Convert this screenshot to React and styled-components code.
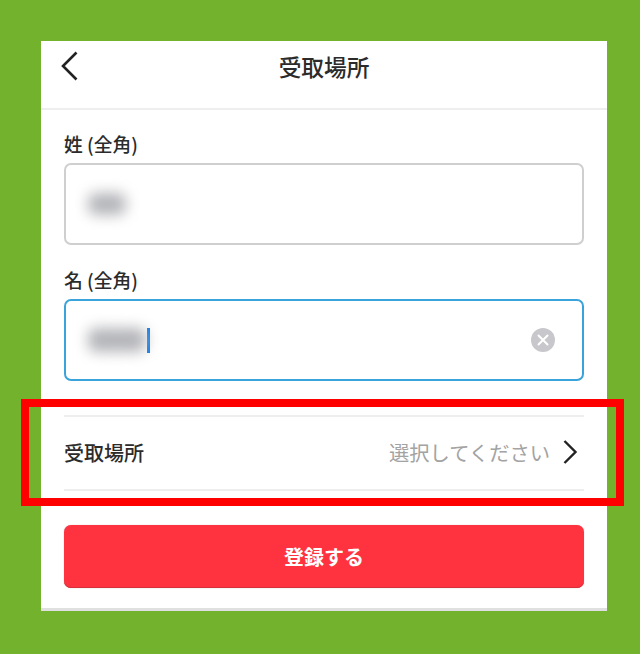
import React from 'react';
import styled, { createGlobalStyle } from 'styled-components';

const GlobalStyle = createGlobalStyle`
  html, body {
    margin: 0;
    padding: 0;
    background: #72b22c;
  }
  body {
    font-family: "Noto Sans CJK JP", "Liberation Sans", sans-serif;
    color: #2b2b2b;
  }
`;

function App() {
  return (
    <Page>
      <GlobalStyle />
      <Card>
        <Header>
          <BackIcon width="18" height="30" viewBox="0 0 18 30">
            <path d="M15.5 1.5 L2 15 L15.5 28.5" />
          </BackIcon>
          <Title>受取場所</Title>
        </Header>
        <Form>
          <Field>
            <Label>姓 (全角)</Label>
            <Input>
              <Smudge $width={38} $height={22} />
            </Input>
          </Field>
          <Field>
            <Label>名 (全角)</Label>
            <Input $focused>
              <Smudge $width={58} $height={24} />
              <Caret />
              <ClearIcon width="24" height="24" viewBox="0 0 24 24">
                <circle cx="12" cy="12" r="12" fill="#c8c8cc" />
                <path d="M7.5 7.5 L16.5 16.5 M16.5 7.5 L7.5 16.5" stroke="#fff" strokeWidth="2" strokeLinecap="round" />
              </ClearIcon>
            </Input>
          </Field>
          <PlaceRow>
            <RowLabel>受取場所</RowLabel>
            <RowValue>選択してください</RowValue>
            <NextIcon width="16" height="26" viewBox="0 0 16 26">
              <path d="M2.5 2 L13.5 13 L2.5 24" />
            </NextIcon>
          </PlaceRow>
          <SubmitButton>登録する</SubmitButton>
        </Form>
      </Card>
      <Highlight />
    </Page>
  );
}

const Page = styled.div`
  position: relative;
  height: 654px;
  padding: 41px 33px 0 41px;
  box-sizing: border-box;
  overflow: hidden;
`;

const Card = styled.div`
  width: 566px;
  height: 570px;
  box-sizing: border-box;
  background: #fff;
  border-bottom: 3px solid #e0e0e0;
`;

const Header = styled.div`
  position: relative;
  height: 69px;
  box-sizing: border-box;
  padding-bottom: 15px;
  border-bottom: 2px solid #eeeeef;
  display: flex;
  justify-content: center;
  align-items: center;
`;

const BackIcon = styled.svg`
  position: absolute;
  left: 20px;
  top: 10px;
  fill: none;
  stroke: #222;
  stroke-width: 2.6;
`;

const Title = styled.h1`
  margin: 0;
  font-size: 22.7px;
  line-height: 30px;
  font-weight: 500;
  color: #2b2b2b;
`;

const Form = styled.div`
  padding: 21px 23px 0;
  display: flex;
  flex-direction: column;
`;

const Field = styled.div`
  margin-bottom: 22px;
  display: flex;
  flex-direction: column;
`;

const Label = styled.label`
  font-size: 18.8px;
  line-height: 26px;
  height: 32px;
  font-weight: 500;
  color: #2b2b2b;
`;

const Input = styled.div`
  height: 82px;
  box-sizing: border-box;
  border: 2px solid ${(p) => (p.$focused ? '#3aa3dc' : '#cfcfcf')};
  border-radius: 7px;
  padding: 0 27px 0 22px;
  display: flex;
  align-items: center;
`;

const Smudge = styled.div`
  width: ${(p) => p.$width}px;
  height: ${(p) => p.$height}px;
  background: #b4b5b9;
  border-radius: 8px;
  filter: blur(7px);
`;

const Caret = styled.div`
  width: 3px;
  height: 25px;
  margin-left: 1px;
  background: #0a7cf0;
`;

const ClearIcon = styled.svg`
  margin-left: auto;
  flex: none;
`;

const PlaceRow = styled.div`
  height: 76px;
  margin-top: 12px;
  padding: 0 6px 2px 0;
  box-sizing: border-box;
  border-top: 2px solid #eeeeef;
  border-bottom: 2px solid #eeeeef;
  display: flex;
  align-items: center;
  gap: 12px;
`;

const RowLabel = styled.span`
  font-size: 20px;
  font-weight: 500;
  color: #2b2b2b;
  margin-right: auto;
`;

const RowValue = styled.span`
  font-size: 20.3px;
  color: #a3a3a3;
`;

const NextIcon = styled.svg`
  flex: none;
  fill: none;
  stroke: #222;
  stroke-width: 2.4;
`;

const SubmitButton = styled.button`
  margin-top: 34px;
  height: 63px;
  box-sizing: border-box;
  border: none;
  border-radius: 7px;
  background: #ff3340;
  box-shadow: inset 0 -1px 0 #d4303c, 0 0 1px #c9a0a4;
  color: #fff;
  font-family: inherit;
  font-size: 20px;
  font-weight: 700;
`;

const Highlight = styled.div`
  position: absolute;
  left: 21px;
  top: 399px;
  width: 603px;
  height: 107px;
  box-sizing: border-box;
  border: 8px solid #ff0000;
  pointer-events: none;
`;

export default App;
